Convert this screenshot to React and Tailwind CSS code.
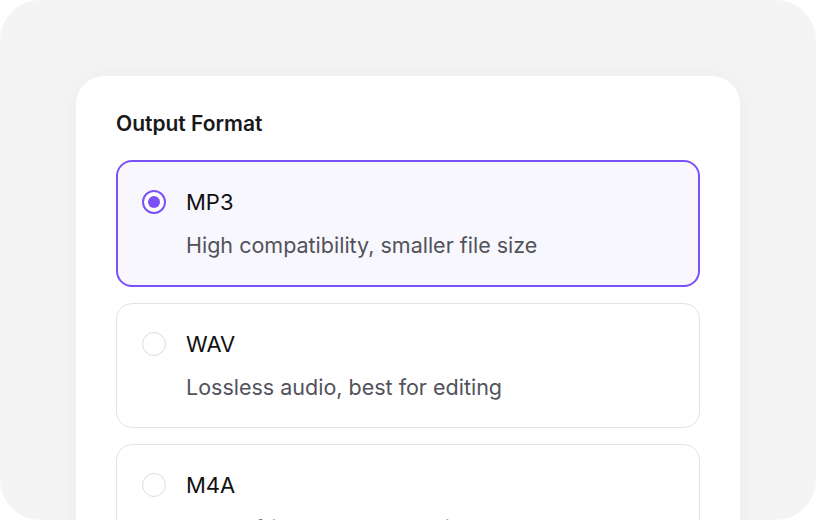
import { useState } from 'react'

const FORMATS = [
  { id: 'mp3', label: 'MP3', desc: 'High compatibility, smaller file size' },
  { id: 'wav', label: 'WAV', desc: 'Lossless audio, best for editing' },
  { id: 'm4a', label: 'M4A', desc: 'Apple-friendly, good quality' },
]

function Option({ f, selected, onSelect }) {
  return (
    <button
      type="button"
      onClick={onSelect}
      className={
        selected
          ? 'w-full text-left rounded-2xl border-2 border-[#7c52f6] bg-[#f8f7fe] px-6 py-[26px]'
          : 'w-full text-left rounded-2xl border border-[#e3e3e3] bg-white px-[25px] pt-[26px] pb-[26px]'
      }
    >
      <div className="flex items-start gap-5">
        <div className="h-7 flex items-center">
          {selected ? (
            <span className="w-6 h-6 rounded-full border-2 border-[#7c52f6] bg-white flex items-center justify-center">
              <span className="w-3 h-3 rounded-full bg-[#7c52f6]" />
            </span>
          ) : (
            <span className="w-6 h-6 rounded-full border-[1.5px] border-[#dcdcdc] bg-white" />
          )}
        </div>
        <div className="flex flex-col gap-[15px]">
          <div className="text-[22px] leading-7 font-normal text-[#111113]">{f.label}</div>
          <div className="text-[21.5px] leading-7 text-[#52525b]">{f.desc}</div>
        </div>
      </div>
    </button>
  )
}

export default function App() {
  const [value, setValue] = useState('mp3')
  return (
    <main className="bg-white" style={{ fontFamily: 'Inter, "Noto Sans", sans-serif' }}>
      <div className="h-[520px] rounded-[40px] bg-[#f4f4f4] overflow-hidden pt-[76px] px-[76px]">
        <div className="bg-white rounded-[28px] shadow-[0_0_24px_rgba(0,0,0,0.04)] px-10 pt-[34px] pb-10">
          <h2 className="text-[21px] leading-7 font-semibold text-[#18181b] mb-[22px]">Output Format</h2>
          <div className="flex flex-col gap-4">
            {FORMATS.map(f => (
              <Option key={f.id} f={f} selected={value === f.id} onSelect={() => setValue(f.id)} />
            ))}
          </div>
        </div>
      </div>
    </main>
  )
}
